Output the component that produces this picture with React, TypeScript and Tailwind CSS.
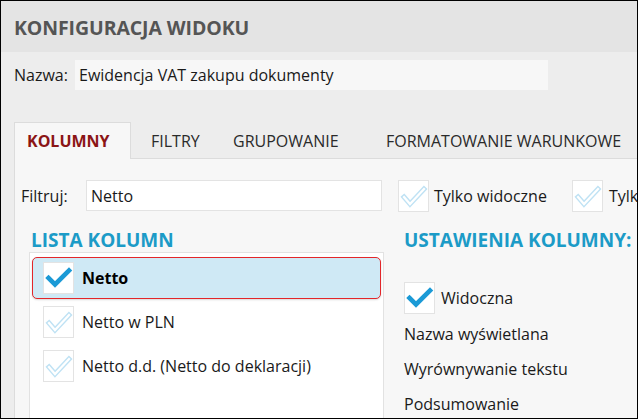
import React from "react";

function Check({ on }: { on: boolean }) {
  return (
    <div className="w-[31px] h-[32px] shrink-0 bg-white border border-[#e3e3e3] flex items-center justify-center">
      <svg width="29" height="30" viewBox="0 0 29 30">
        {on ? (
          <polyline points="4.5,15 11,21.5 25,7.5" fill="none" stroke="#1b9ad6" strokeWidth="4.6" strokeLinecap="square" strokeLinejoin="miter" />
        ) : (
          <>
            <polyline points="5,16 11,23 25,8" fill="none" stroke="#bfe2f4" strokeWidth="5" strokeLinecap="square" />
            <polyline points="5,16 11,23 25,8" fill="none" stroke="#ffffff" strokeWidth="2.2" strokeLinecap="square" />
          </>
        )}
      </svg>
    </div>
  );
}

export default function App() {
  return (
    <div className="w-[638px] h-[419px] border border-black overflow-hidden bg-[#ededed] font-['Open_Sans',sans-serif] text-[#1a1a1a] flex flex-col">
      <div className="h-[51px] shrink-0 bg-[#e4e4e4] pl-[13px] pt-[3px] flex items-center">
        <span className="text-[19.5px] font-bold text-[#555] tracking-[-0.1px]">KONFIGURACJA WIDOKU</span>
      </div>
      <div className="mt-[8px] h-[30px] pl-[13px] flex items-center shrink-0">
        <span className="w-[61px] text-[16px]">Nazwa:</span>
        <div className="w-[473px] h-[30px] bg-[#f7f7f7] pl-[4px] flex items-center text-[16px]">
          Ewidencja VAT zakupu dokumenty
        </div>
      </div>
      <div className="mt-[32px] pl-[13px] flex h-[37px] shrink-0 relative z-10 text-[16px]">
        <div className="w-[117px] h-[37px] bg-[#f7f7f7] border-t border-l border-r border-[#dcdcdc] pl-[12px] flex items-center font-bold text-[#8b1515]">
          KOLUMNY
        </div>
        <div className="w-[82px] pl-[20px] flex items-center text-[#2a2a2a]">FILTRY</div>
        <div className="w-[153px] pl-[20px] flex items-center text-[#2a2a2a]">GRUPOWANIE</div>
        <div className="pl-[20px] flex items-center text-[#2a2a2a] whitespace-nowrap">FORMATOWANIE WARUNKOWE</div>
      </div>
      <div className="-mt-px ml-[13px] flex-1 border-l border-t border-[#dcdcdc] bg-[#f7f7f7] flex flex-col">
        <div className="mt-[21px] h-[31px] flex items-center pl-[6px] text-[16px]">
          <span className="w-[65px] shrink-0">Filtruj:</span>
          <div className="w-[296px] shrink-0 h-[31px] bg-white border border-[#e3e3e3] pl-[4px] flex items-center">Netto</div>
          <div className="ml-[16px] w-[174px] shrink-0 flex items-center gap-[5px]">
            <Check on={false} />
            <span className="whitespace-nowrap">Tylko widoczne</span>
          </div>
          <div className="flex items-center gap-[6px] shrink-0">
            <Check on={false} />
            <span className="whitespace-nowrap">Tylko</span>
          </div>
        </div>
        <div className="mt-[17px] flex flex-1">
          <div className="ml-[14px] w-[355px] shrink-0 flex flex-col">
            <div className="h-[24px] pl-[2px] flex items-center text-[19px] font-bold text-[#1c9bc7] whitespace-nowrap">LISTA KOLUMN</div>
            <div className="flex-1 bg-white border border-[#e2e2e2] pt-[4px] px-[2px] text-[16px]">
              <div className="h-[42px] border-[1.5px] border-[#e3262a] rounded-[5px] bg-[#cfe9f5] pl-[10px] flex items-center gap-[8px] shadow-[0_1px_2px_rgba(0,0,0,0.15)]">
                <Check on={true} />
                <span className="font-bold text-black">Netto</span>
              </div>
              <div className="mt-[1px] h-[44px] pl-[11px] flex items-center gap-[8px]">
                <Check on={false} />
                <span>Netto w PLN</span>
              </div>
              <div className="h-[44px] pl-[11px] flex items-center gap-[8px]">
                <Check on={false} />
                <span className="whitespace-nowrap">Netto d.d. (Netto do deklaracji)</span>
              </div>
            </div>
          </div>
          <div className="ml-[20px] flex flex-col text-[16px]">
            <div className="h-[24px] flex items-center text-[19px] font-bold text-[#1c9bc7] whitespace-nowrap">USTAWIENIA KOLUMNY:</div>
            <div className="mt-[30px] flex items-center gap-[6px]">
              <Check on={true} />
              <span>Widoczna</span>
            </div>
            <div className="mt-[2px] h-[35px] flex items-center whitespace-nowrap">Nazwa wyświetlana</div>
            <div className="h-[35px] flex items-center whitespace-nowrap">Wyrównywanie tekstu</div>
            <div className="h-[35px] flex items-center whitespace-nowrap">Podsumowanie</div>
          </div>
        </div>
      </div>
    </div>
  );
}
